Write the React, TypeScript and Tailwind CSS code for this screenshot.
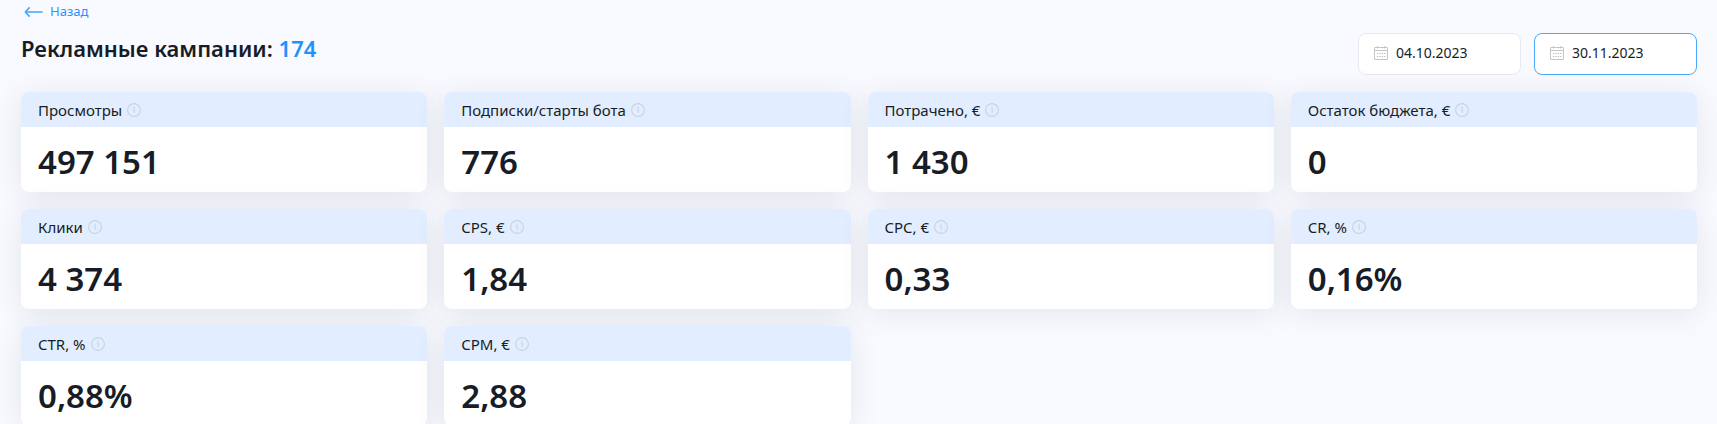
import { useState } from "react";

interface Stat {
  label: string;
  value: string;
}

const stats: Stat[] = [
  { label: "Просмотры", value: "497 151" },
  { label: "Подписки/старты бота", value: "776" },
  { label: "Потрачено, €", value: "1 430" },
  { label: "Остаток бюджета, €", value: "0" },
  { label: "Клики", value: "4 374" },
  { label: "CPS, €", value: "1,84" },
  { label: "CPC, €", value: "0,33" },
  { label: "CR, %", value: "0,16%" },
  { label: "CTR, %", value: "0,88%" },
  { label: "CPM, €", value: "2,88" },
];

function ArrowLeft() {
  return (
    <svg width="20" height="12" viewBox="0 0 20 12" fill="none" stroke="#4aa9fb" strokeWidth="1.6">
      <path d="M1.5 6H18.5" />
      <path d="M5.6 1.4L1.4 6L5.6 10.6" />
    </svg>
  );
}

function InfoIcon() {
  return (
    <svg width="14" height="14" viewBox="0 0 14 14" fill="none" stroke="#c6d3e0">
      <circle cx="7" cy="7" r="6.4" strokeWidth="1.1" />
      <path d="M5.8 6.2H7.2V9.8" strokeWidth="1.1" />
      <path d="M6.4 4.4H7.6" strokeWidth="1.1" />
    </svg>
  );
}

function CalendarIcon() {
  return (
    <svg width="14" height="14" viewBox="0 0 14 14" fill="none" stroke="#c3c5c9" className="shrink-0">
      <rect x="0.5" y="1.5" width="13" height="12" rx="0.5" />
      <path d="M0.5 4.5H13.5" />
      <path d="M3.5 0V2.5M10.5 0V2.5" />
      <path d="M3 7.5H11.5M3 10.5H11.5" strokeDasharray="1.5 0.8" />
    </svg>
  );
}

interface DateFieldProps {
  label: string;
  value: string;
  active?: boolean;
  onChange: (value: string) => void;
}

function DateField({ label, value, active, onChange }: DateFieldProps) {
  return (
    <label
      className={`flex h-[42px] w-[163px] items-center gap-2 rounded-lg border bg-white px-[15px] pb-0.5 ${
        active ? "border-[#4ba9fb]" : "border-[#e6e9f2]"
      }`}
    >
      <CalendarIcon />
      <input
        type="text"
        aria-label={label}
        value={value}
        onChange={(e) => onChange(e.target.value)}
        className="w-full min-w-0 bg-transparent text-sm outline-none"
      />
    </label>
  );
}

function StatCard({ label, value }: Stat) {
  return (
    <div className="rounded-lg bg-white shadow-[0_4px_30px_rgba(34,60,80,0.11)]">
      <div className="flex h-[35px] items-center gap-[5px] rounded-t-lg bg-[#e2eeff] px-[17px]">
        <span className="pt-0.5 text-[15px]">{label}</span>
        <InfoIcon />
      </div>
      <div className="px-[17px] pt-[17px] pb-3 text-[33px] leading-9 font-semibold">{value}</div>
    </div>
  );
}

export default function App() {
  const [from, setFrom] = useState("04.10.2023");
  const [to, setTo] = useState("30.11.2023");

  return (
    <div className="min-h-screen bg-[#f9faff] pr-5 pl-[21px] font-['Noto_Sans','Open_Sans',sans-serif] text-[#171c26]">
      <a href="#" className="ml-[3px] inline-flex h-6 items-center gap-[6px] text-[13px] text-[#2a93fb]">
        <ArrowLeft />
        Назад
      </a>
      <div className="mb-[17px] flex justify-between">
        <h1 className="mt-2 text-[22px] leading-8 font-semibold">
          Рекламные кампании: <span className="text-[#1f92ff]">174</span>
        </h1>
        <div className="mt-[9px] flex gap-[13px]">
          <DateField label="Дата начала" value={from} onChange={setFrom} />
          <DateField label="Дата окончания" value={to} onChange={setTo} active />
        </div>
      </div>
      <div className="grid grid-cols-4 gap-[17px]">
        {stats.map((stat) => (
          <StatCard key={stat.label} {...stat} />
        ))}
      </div>
    </div>
  );
}
